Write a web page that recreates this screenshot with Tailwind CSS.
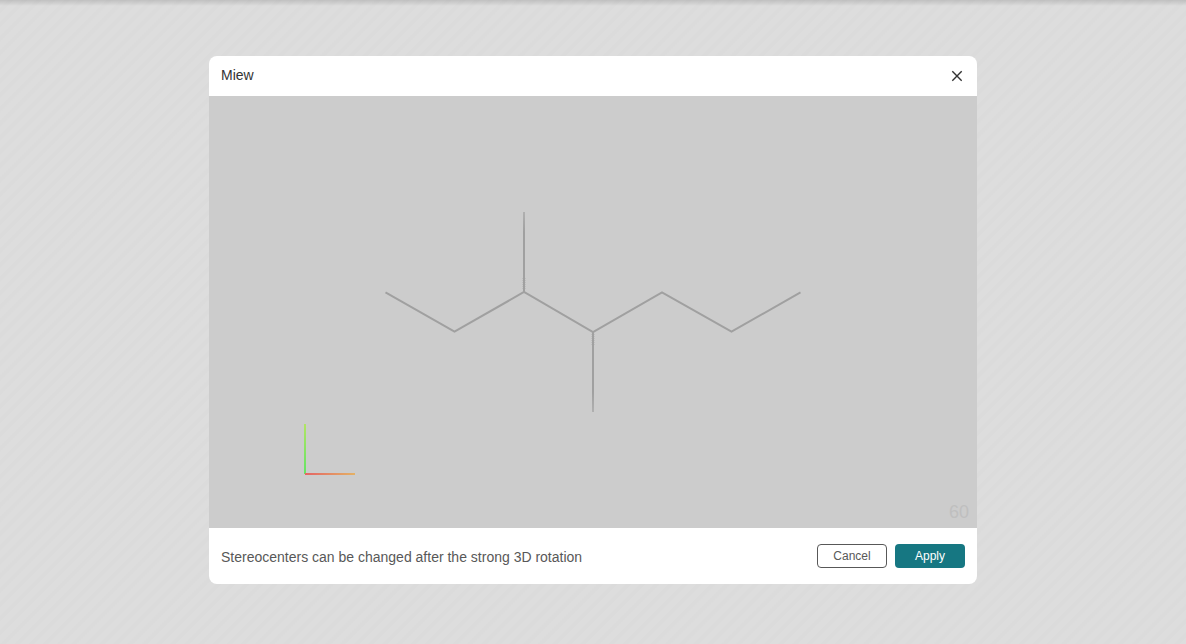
<!DOCTYPE html>
<html lang="en">
<head>
<meta charset="utf-8">
<title>Miew</title>
<script src="https://cdn.jsdelivr.net/npm/@tailwindcss/browser@4"></script>
</head>
<body class="font-[Helvetica,'Liberation_Sans',sans-serif]">
<div class="flex min-h-screen items-center justify-center bg-[#dddddd] bg-[linear-gradient(to_bottom,rgba(0,0,0,0.13),transparent_6px),repeating-linear-gradient(135deg,#dddddd_0px,#dddddd_5px,#dbdbdb_6px,#dbdbdb_9px,#dddddd_10px)] pt-14 pb-15">
  <section role="dialog" aria-labelledby="title" class="flex w-full max-w-3xl flex-col overflow-hidden rounded-lg bg-white">
    <header class="flex h-10 items-center justify-between px-3">
      <h1 id="title" class="pb-0.5 text-sm leading-5 text-[#333333]">Miew</h1>
      <button type="button" aria-label="Close" class="flex size-4 items-center justify-center text-[#333333]">
        <svg class="size-4" viewBox="0 0 16 16" fill="none" stroke="currentColor" stroke-width="1.4"><path d="M3.3 3.3l9.4 9.4M12.7 3.3l-9.4 9.4"/></svg>
      </button>
    </header>
    <main class="relative bg-[#cccccc]">
      <svg class="block h-auto w-full" viewBox="0 0 768 432" fill="none" role="img" aria-label="Molecule">
        <defs>
          <linearGradient id="up" gradientUnits="userSpaceOnUse" x1="0" y1="116" x2="0" y2="136"><stop stop-color="#b0b0b0"/><stop offset="1" stop-color="#a0a0a0"/></linearGradient>
          <linearGradient id="down" gradientUnits="userSpaceOnUse" x1="0" y1="296" x2="0" y2="316"><stop stop-color="#a0a0a0"/><stop offset="1" stop-color="#b0b0b0"/></linearGradient>
          <linearGradient id="axisY" gradientUnits="userSpaceOnUse" x1="0" y1="328" x2="0" y2="378"><stop stop-color="#b1e464"/><stop offset="1" stop-color="#64e464"/></linearGradient>
          <linearGradient id="axisX" gradientUnits="userSpaceOnUse" x1="96" y1="0" x2="146" y2="0"><stop stop-color="#e46464"/><stop offset="1" stop-color="#e4b164"/></linearGradient>
        </defs>
        <path d="M176.500 196.300L245.500 235.700L315 196L384 236L453 196.300L522.500 235.700L591.500 196.300" stroke="#a0a0a0" stroke-width="2"/>
        <path d="M315 116V196" stroke="url(#up)" stroke-width="2"/>
        <path d="M384 236V316" stroke="url(#down)" stroke-width="2"/>
        <path d="M313.500 182V194M316.500 182V194M382.500 238V250M385.500 238V250" stroke="#bebebe" stroke-dasharray="1 1"/>
        <path d="M96 328V378" stroke="url(#axisY)" stroke-width="2"/>
        <path d="M96 378H146" stroke="url(#axisX)" stroke-width="2"/>
      </svg>
      <output class="absolute right-2 bottom-1 text-lg leading-6 text-[#bfbfbf]">60</output>
    </main>
    <footer class="flex h-14 items-center justify-between px-3">
      <p class="pt-0.5 text-sm leading-5 text-[#585858]">Stereocenters can be changed after the strong 3D rotation</p>
      <div class="flex gap-2 font-['Liberation_Sans',Arial,sans-serif] text-xs">
        <button type="button" class="h-6 w-[70px] rounded border border-[#585858] bg-white text-[#585858]">Cancel</button>
        <button type="button" class="h-6 w-[70px] rounded bg-[#167782] text-white">Apply</button>
      </div>
    </footer>
  </section>
</div>
</body>
</html>
